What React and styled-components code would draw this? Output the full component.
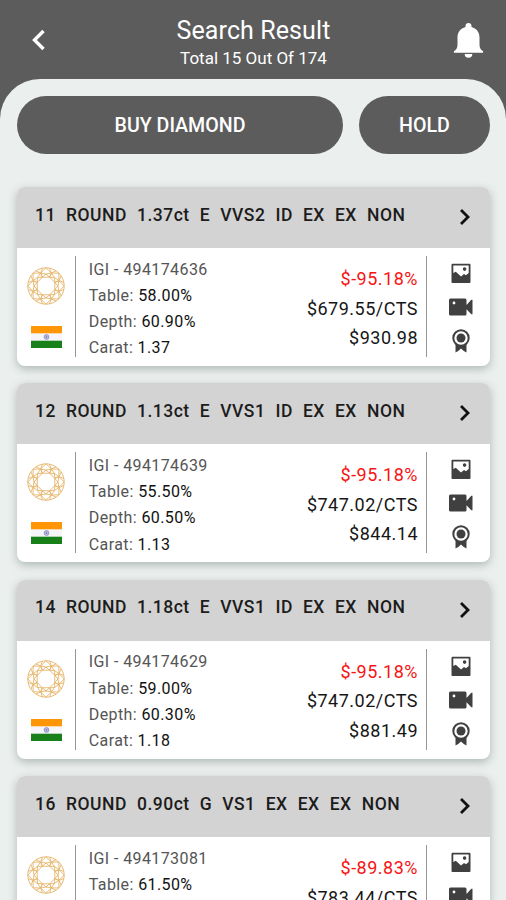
import React from 'react'
import styled, { createGlobalStyle } from 'styled-components'

const GlobalStyle = createGlobalStyle`
  * {
    box-sizing: border-box;
  }

  body {
    margin: 0;
    background-color: #5c5c5c;
    font-family: Roboto, "Liberation Sans", sans-serif;
  }
`

const Screen = styled.div`
  width: 506px;
  height: 900px;
  overflow: hidden;
  display: flex;
  flex-direction: column;
  background-color: #5c5c5c;
`

const Header = styled.header`
  height: 79px;
  flex: none;
  display: flex;
  justify-content: space-between;
  padding: 0 22px 0 28px;
  color: white;
`

const BackIcon = styled.svg`
  width: 20px;
  height: 24px;
  margin-top: 28px;
`

const BellIcon = styled.svg`
  width: 31px;
  height: 37px;
  margin-top: 22px;
`

const HeaderText = styled.div`
  display: flex;
  flex-direction: column;
  align-items: center;
  padding: 15px 0 0 6px;
`

const Title = styled.h1`
  margin: 0;
  font-size: 25px;
  line-height: 32px;
  font-weight: 400;
  letter-spacing: 0.1px;
`

const Subtitle = styled.p`
  margin: 1px 0 0;
  font-size: 17px;
  line-height: 20px;
`

const Sheet = styled.main`
  flex: 1;
  min-height: 0;
  padding: 17px 16px 0 17px;
  background-color: #ebefee;
  border-radius: 40px 40px 0 0;
`

const ButtonBar = styled.div`
  display: flex;
  justify-content: space-between;
`

const ActionButton = styled.button`
  width: ${(props) => props.$width};
  height: 57.5px;
  padding: 2px 0 0;
  border: 0;
  border-radius: 29px;
  background-color: #5c5c5c;
  color: white;
  font-family: inherit;
  font-size: 19.6px;
  font-weight: 500;
`

const CardList = styled.div`
  display: flex;
  flex-direction: column;
  gap: 17.4px;
  margin-top: 33.5px;
`

const Card = styled.article`
  height: 179px;
  flex: none;
  overflow: hidden;
  border-radius: 8px;
  background-color: white;
  box-shadow: 0 3px 8px rgba(60, 80, 75, 0.34);
`

const CardHeader = styled.div`
  height: 61px;
  display: flex;
  justify-content: space-between;
  padding: 0 18px;
  background-color: #d3d3d3;
`

const CardTitle = styled.h2`
  margin: 17.7px 0 0;
  font-size: 17.5px;
  line-height: 20px;
  font-weight: 500;
  letter-spacing: 0.5px;
  word-spacing: 0.2px;
  white-space: pre;
  color: #1c1c1c;
`

const ArrowIcon = styled.svg`
  width: 14px;
  height: 18px;
  margin-top: 21px;
`

const CardBody = styled.div`
  display: flex;
  height: 118px;
  padding: 8px 0 9px;
`

const Origin = styled.div`
  width: 58px;
  display: flex;
  flex-direction: column;
  align-items: center;
  gap: 21px;
  padding-top: 11px;
`

const Divider = styled.div`
  width: 1.4px;
  background-color: #969696;
`

const Details = styled.div`
  flex: 1;
  padding: 0.6px 0 0 12.4px;
`

const Detail = styled.p`
  margin: 0;
  font-size: 16px;
  line-height: 26.2px;
  letter-spacing: 0.4px;
  color: #555;
`

const Value = styled.span`
  color: #111;
`

const Prices = styled.div`
  padding: 8px 7.6px 0 0;
  text-align: right;
`

const Price = styled.p`
  margin: 0;
  font-size: 18px;
  line-height: 29.5px;
  letter-spacing: 0.5px;
  color: ${(props) => (props.$discount ? '#f81414' : '#161616')};
`

const Media = styled.div`
  width: 63px;
  display: flex;
  flex-direction: column;
  align-items: center;
  gap: 9px;
  padding: 7px 0 0 5px;
`

const MediaIcon = styled.svg`
  width: 26px;
  height: 24px;
  flex: none;
`

const stones = [
  { title: '11  ROUND  1.37ct  E  VVS2  ID  EX  EX  NON', report: 'IGI - 494174636', table: '58.00%', depth: '60.90%', carat: '1.37', discount: '$-95.18%', rate: '$679.55/CTS', total: '$930.98' },
  { title: '12  ROUND  1.13ct  E  VVS1  ID  EX  EX  NON', report: 'IGI - 494174639', table: '55.50%', depth: '60.50%', carat: '1.13', discount: '$-95.18%', rate: '$747.02/CTS', total: '$844.14' },
  { title: '14  ROUND  1.18ct  E  VVS1  ID  EX  EX  NON', report: 'IGI - 494174629', table: '59.00%', depth: '60.30%', carat: '1.18', discount: '$-95.18%', rate: '$747.02/CTS', total: '$881.49' },
  { title: '16  ROUND  0.90ct  G  VS1  EX  EX  EX  NON', report: 'IGI - 494173081', table: '61.50%', discount: '$-89.83%', rate: '$783.44/CTS' }
]

const point = (radius, step) => {
  const angle = (step * Math.PI) / 8
  return `${(19 + radius * Math.sin(angle)).toFixed(2)},${(19 - radius * Math.cos(angle)).toFixed(2)}`
}

const facets = [0, 2, 4, 6, 8, 10, 12, 14]

function RoundDiamond() {
  return (
    <svg width="38" height="38" viewBox="0 0 38 38" fill="none" stroke="#e5b469" strokeWidth="0.9">
      <circle cx="19" cy="19" r="18.2" />
      <polygon points={facets.map((step) => point(9.5, step + 1)).join(' ')} />
      {facets.map((step) => (
        <g key={step}>
          <polygon points={[point(18.2, step), point(14, step + 1), point(9.5, step + 1), point(12, step), point(9.5, step - 1), point(14, step - 1)].join(' ')} />
          <polyline points={[point(18.2, step + 0.5), point(14, step + 1), point(18.2, step + 1.5)].join(' ')} />
          <polyline points={[point(14, step - 1), point(12, step), point(14, step + 1)].join(' ')} />
        </g>
      ))}
    </svg>
  )
}

function IndiaFlag() {
  return (
    <svg width="31" height="22" viewBox="0 0 31 22">
      <rect width="31" height="22" fill="#f6f6fa" />
      <rect width="31" height="7.3" fill="#ff9608" />
      <rect y="14.7" width="31" height="7.3" fill="#188018" />
      <circle cx="15.5" cy="11" r="2.4" fill="#c0c0e2" stroke="#8585c2" strokeWidth="0.8" />
      <circle cx="15.5" cy="11" r="0.8" fill="#6868b4" />
    </svg>
  )
}

function StoneCard({ stone }) {
  return (
    <Card>
      <CardHeader>
        <CardTitle>{stone.title}</CardTitle>
        <ArrowIcon viewBox="0 0 14 18" fill="none" stroke="#111" strokeWidth="2.8">
          <path d="M3 2l7 7-7 7" />
        </ArrowIcon>
      </CardHeader>
      <CardBody>
        <Origin>
          <RoundDiamond />
          <IndiaFlag />
        </Origin>
        <Divider />
        <Details>
          <Detail>{stone.report}</Detail>
          <Detail>Table: <Value>{stone.table}</Value></Detail>
          {stone.depth && <Detail>Depth: <Value>{stone.depth}</Value></Detail>}
          {stone.carat && <Detail>Carat: <Value>{stone.carat}</Value></Detail>}
        </Details>
        <Prices>
          <Price $discount>{stone.discount}</Price>
          <Price>{stone.rate}</Price>
          {stone.total && <Price>{stone.total}</Price>}
        </Prices>
        <Divider />
        <Media>
          <MediaIcon viewBox="0 0 26 24" fill="#404040">
            <path fillRule="evenodd" d="M4.500 .7h17a1 1 0 0 1 1 1v17.300a1 1 0 0 1-1 1h-17a1 1 0 0 1-1-1v-17.300a1 1 0 0 1 1-1zM5.300 2.500v7.500l2.500-1.200 5.200 4.700 3-2.500 2 1.200 2.700-2.200v-7.500zM16.600 4.300a1.800 1.800 0 1 1 0 3.600 1.800 1.800 0 0 1 0-3.600z" />
          </MediaIcon>
          <MediaIcon viewBox="0 0 26 24" fill="#404040">
            <path fillRule="evenodd" d="M2.500 2.500h14.500a1.500 1.500 0 0 1 1.500 1.500v5l4.800-5.200h1.200v14.500h-1.200l-4.800-5v4.700a1.500 1.500 0 0 1-1.500 1.500h-14.500a1.500 1.500 0 0 1-1.500-1.500v-14a1.500 1.500 0 0 1 1.500-1.500zM6 5.600a1.400 1.400 0 1 0 0 2.800 1.400 1.400 0 0 0 0-2.800z" />
          </MediaIcon>
          <MediaIcon viewBox="0 0 26 24" fill="#404040">
            <path d="M7.500 14v9.500l2.700-1.400 2.800-2.500 2.800 2.500 2.700 1.400v-9.500z" />
            <circle cx="13" cy="9" r="7.700" fill="white" stroke="#404040" strokeWidth="2" />
            <circle cx="13" cy="9" r="4.500" />
          </MediaIcon>
        </Media>
      </CardBody>
    </Card>
  )
}

class App extends React.Component {
  render() {
    return (
      <Screen>
        <GlobalStyle />
        <Header>
          <BackIcon viewBox="0 0 20 24" fill="none" stroke="white" strokeWidth="3.4">
            <path d="M15.500 3l-9 9 9 9" />
          </BackIcon>
          <HeaderText>
            <Title>Search Result</Title>
            <Subtitle>Total 15 Out Of 174</Subtitle>
          </HeaderText>
          <BellIcon viewBox="0 0 31 37" fill="white">
            <path d="M15.500 1c1.800 0 3 1.100 3 2.800v1.200c5 1.400 8 5.200 8 10.500v7c0 3.200 1 5 3.600 6.700v1.600h-29.200v-1.600c2.600-1.700 3.600-3.500 3.600-6.700v-7c0-5.300 3-9.100 8-10.500v-1.200c0-1.700 1.200-2.800 3-2.800zM11.700 32h7.600a3.800 3.800 0 0 1-7.600 0z" />
          </BellIcon>
        </Header>
        <Sheet>
          <ButtonBar>
            <ActionButton $width="326px">BUY DIAMOND</ActionButton>
            <ActionButton $width="131px">HOLD</ActionButton>
          </ButtonBar>
          <CardList>
            {stones.map((stone) => (
              <StoneCard key={stone.title} stone={stone} />
            ))}
          </CardList>
        </Sheet>
      </Screen>
    )
  }
}

export default App
